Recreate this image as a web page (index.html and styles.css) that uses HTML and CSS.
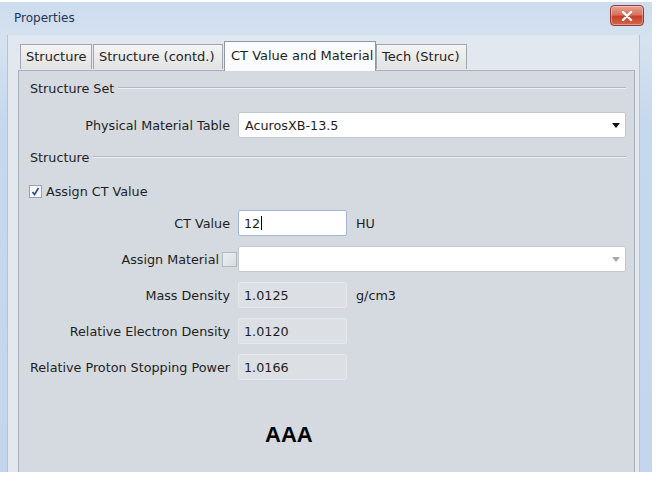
FILE: index.html
```html
<!DOCTYPE html>
<html lang="en">
<head>
  <meta charset="UTF-8">
  <title>Properties</title>
  <link rel="stylesheet" href="styles.css">
</head>
<body>
  <div class="window">
    <div class="titlebar">
      <span class="title">Properties</span>
      <button class="close" aria-label="Close">
        <svg width="12" height="10" viewBox="0 0 12 10">
          <path d="M2 1 L10 9 M10 1 L2 9" stroke="#fff" stroke-width="2.4" stroke-linecap="round"/>
        </svg>
      </button>
    </div>

    <div class="dialog">
      <div class="tabs">
        <div class="tab tab-structure">Structure</div>
        <div class="tab tab-contd">Structure (contd.)</div>
        <div class="tab tab-ct active">CT Value and Material</div>
        <div class="tab tab-tech">Tech (Struc)</div>
      </div>

      <div class="panel">
        <div class="group-title"><span>Structure Set</span></div>
        <div class="form first">
          <label>Physical Material Table</label>
          <div class="combo wide">
            <span>AcurosXB-13.5</span>
            <i class="arrow"></i>
          </div>
        </div>

        <div class="group-title second"><span>Structure</span></div>
        <div class="check-row">
          <span class="checkbox checked">
            <svg width="9" height="9" viewBox="0 0 9 9">
              <path d="M1.5 5 L3.5 7.5 L7.5 1" fill="none" stroke="#2a4e8c" stroke-width="1.6"/>
            </svg>
          </span>
          <span>Assign CT Value</span>
        </div>

        <div class="form fields">
          <label>CT Value</label>
          <div class="input editing">12<i class="caret"></i></div>
          <span class="unit">HU</span>

          <label class="with-check">Assign Material <span class="checkbox"></span></label>
          <div class="combo wide disabled-arrow">
            <span></span>
            <i class="arrow"></i>
          </div>

          <label>Mass Density</label>
          <div class="input readonly">1.0125</div>
          <span class="unit">g/cm3</span>

          <label>Relative Electron Density</label>
          <div class="input readonly">1.0120</div>
          <span></span>

          <label>Relative Proton Stopping Power</label>
          <div class="input readonly">1.0166</div>
          <span></span>
        </div>

        <div class="note">AAA</div>
      </div>
    </div>
  </div>
</body>
</html>
```

FILE: styles.css
```css
body {
  margin: 0;
  background-color: #fff;
  font-family: "DejaVu Sans", Verdana, sans-serif;
  font-size: 12.75px;
  color: #1e1e1e;
}
.window {
  margin-top: 2px;
  width: 652px;
  height: 470px;
  overflow: hidden;
  display: flex;
  flex-direction: column;
  background: linear-gradient(to bottom, #cddcee 0, #d5e2f0 40px, #c6d8ed 120px, #c3d6ee 100%);
}
.titlebar {
  height: 33px;
  display: flex;
  align-items: center;
  justify-content: space-between;
  padding: 0 8px 0 14px;
  flex-shrink: 0;
}
.title {
  color: #1c3556;
  font-size: 12px;
  margin-top: -1px;
}
.close {
  width: 34px;
  height: 21px;
  margin-top: -6px;
  border: 1px solid #8a3d33;
  border-radius: 4px;
  background: linear-gradient(to bottom, #e9a393 0, #d9735f 45%, #c4412a 55%, #d5664f 100%);
  box-shadow: inset 0 0 0 1px rgba(255, 255, 255, 0.35);
  display: flex;
  align-items: center;
  justify-content: center;
  padding: 0;
}
.dialog {
  flex: 1;
  margin: 0 12px 0 7px;
  padding: 5px 4px 0 10px;
  background: linear-gradient(to bottom, #dfe7f0 0, #e3e8ee 30px, #e4e8ed 100%);
  border-left: 1px solid #b8c3cf;
  border-right: 1px solid #b8c3cf;
  display: flex;
  flex-direction: column;
}
.tabs {
  display: flex;
  align-items: flex-end;
  height: 30px;
  padding-left: 2px;
  position: relative;
  z-index: 1;
}
.tab {
  height: 25px;
  box-sizing: border-box;
  padding: 0 0 0 5px;
  line-height: 23px;
  font-size: 13px;
  white-space: nowrap;
  overflow: hidden;
  border: 1px solid #9ea6af;
  border-bottom: none;
  background: linear-gradient(to bottom, #f4f4f4, #e2e2e2);
  margin-right: 1px;
  margin-bottom: 1px;
}
.tab-structure { width: 72px; }
.tab-contd { width: 130px; }
.tab-ct { width: 152px; }
.tab-tech { width: 91px; margin-left: -1px; }
.tab.active {
  height: 30px;
  margin-bottom: -1px;
  line-height: 28px;
  background: #fafbfc;
  border-color: #8f99a5;
  padding-left: 6px;
}
.panel {
  flex: 1;
  border: 1px solid #a9b1ba;
  border-bottom: none;
  background-color: #d5dae1;
  padding: 9px 8px 0 11px;
}
.group-title {
  display: flex;
  align-items: center;
  height: 16px;
}
.group-title::after {
  content: "";
  flex: 1;
  margin-left: 4px;
  border-top: 1px solid #b2b9c2;
  border-bottom: 1px solid #eef1f4;
}
.group-title.second {
  margin-top: 11px;
}
.form {
  display: grid;
  grid-template-columns: 200px 109px 1fr;
  column-gap: 8px;
  align-items: center;
}
.form.first {
  margin-top: 16px;
}
.form label {
  text-align: right;
  display: flex;
  justify-content: flex-end;
  align-items: center;
  white-space: nowrap;
}
.form .wide {
  grid-column: 2 / span 2;
}
.combo {
  height: 26px;
  box-sizing: border-box;
  background-color: #fff;
  border: 1px solid #c3c8ce;
  border-radius: 2px;
  display: flex;
  align-items: center;
  justify-content: space-between;
  padding: 0 5px 0 6px;
}
.arrow {
  width: 0;
  height: 0;
  border-left: 4px solid transparent;
  border-right: 4px solid transparent;
  border-top: 5px solid #111;
}
.disabled-arrow .arrow {
  border-top-color: #a5a8ad;
}
.check-row {
  margin-top: 18px;
  display: flex;
  align-items: center;
  gap: 4px;
  height: 16px;
  margin-left: -1px;
}
.checkbox {
  width: 11px;
  height: 11px;
  border: 1px solid #9aa2ac;
  background: linear-gradient(to bottom right, #eef0f3, #d7dbe0);
  display: inline-flex;
  align-items: center;
  justify-content: center;
}
.checkbox.checked {
  background: #f4f6f9;
}
.fields {
  margin-top: 11px;
  row-gap: 10px;
}
.fields > * {
  height: 26px;
}
.with-check {
  gap: 3px;
  margin-right: -7px;
}
.with-check .checkbox {
  width: 13px;
  height: 13px;
  border-color: #b3b8be;
}
.input {
  box-sizing: border-box;
  display: flex;
  align-items: center;
  padding-left: 5px;
  border-radius: 2px;
}
.input.editing {
  background-color: #fff;
  border: 1px solid #9fb6d5;
}
.caret {
  width: 1px;
  height: 14px;
  background-color: #000;
  margin-left: 1px;
}
.input.readonly {
  background-color: #dcdfe4;
  border: 1px solid #e6e8eb;
}
.unit {
  display: flex;
  align-items: center;
  margin-left: 1px;
}
.note {
  margin: 42px 0 0 235px;
  font-family: "Liberation Sans", Arial, sans-serif;
  font-weight: bold;
  font-size: 22px;
  color: #000;
}
```
